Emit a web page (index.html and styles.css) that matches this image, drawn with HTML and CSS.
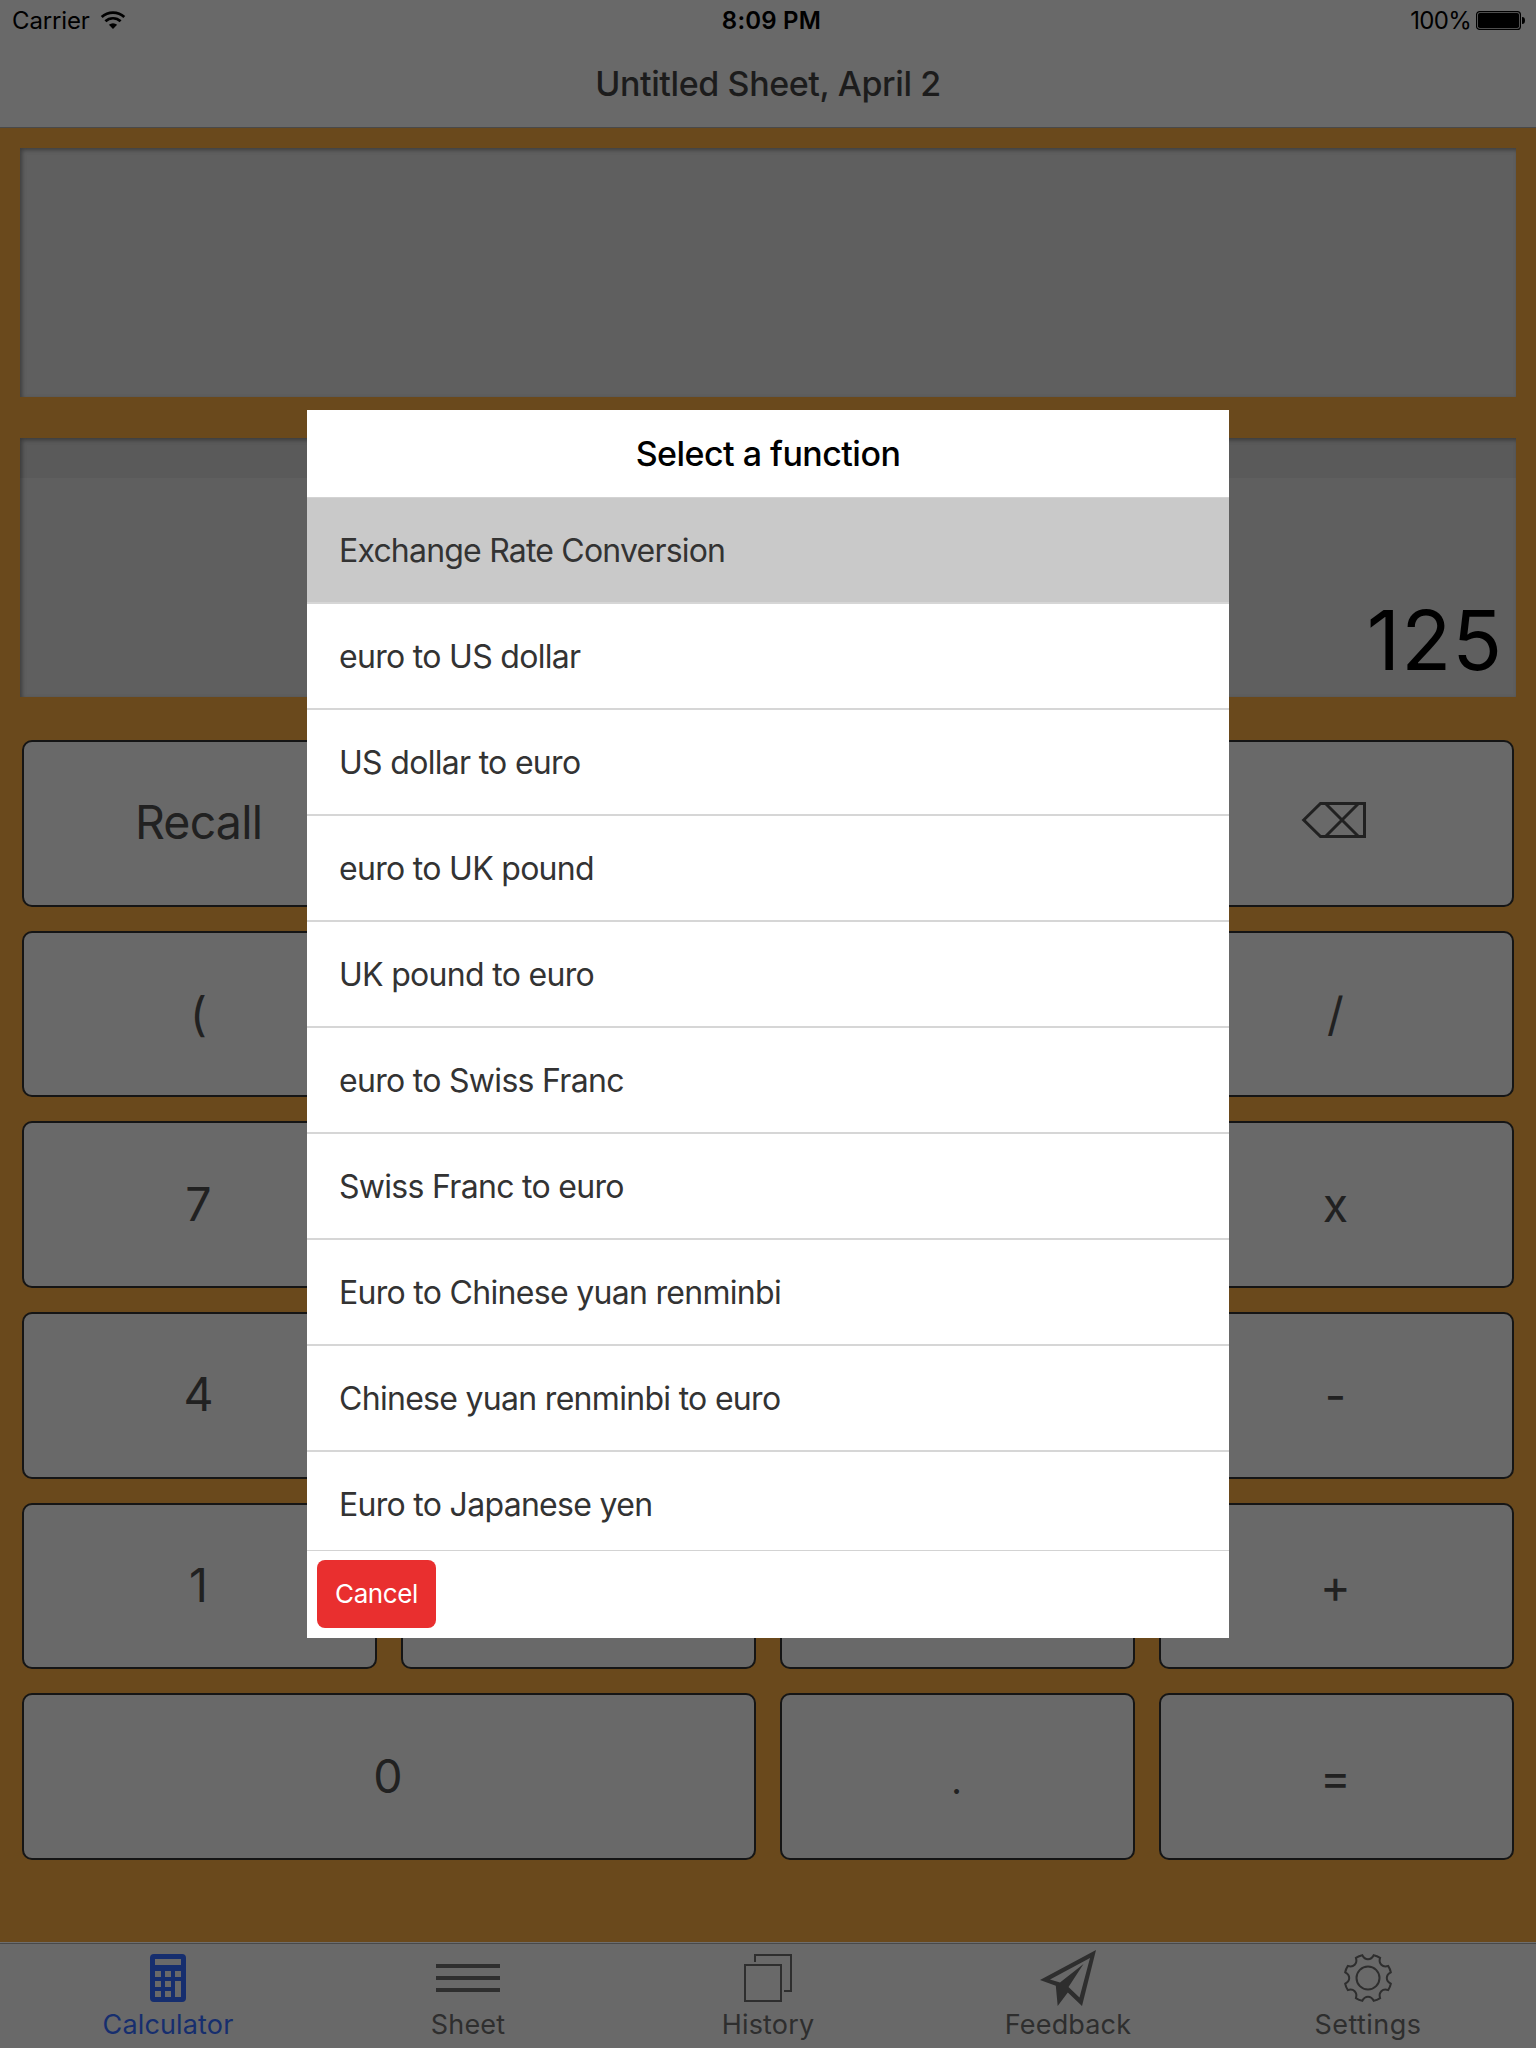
FILE: index.html
```html
<!DOCTYPE html>
<html lang="en">
<head>
<meta charset="utf-8">
<title>Calculator</title>
<link rel="stylesheet" href="styles.css">
</head>
<body>
<div class="app">
  <header class="topbar">
    <div class="status">
      <div class="status-left"><span class="carrier">Carrier</span>
        <svg class="wifi" width="26" height="20" viewBox="0 0 26 20"><g fill="none" stroke="#000" stroke-width="2.7"><path d="M1.7 7.1a16.4 16.4 0 0 1 22.6 0"/><path d="M5.4 11.3a11 11 0 0 1 15.2 0"/></g><path d="M13 19l-4.1-4.2a6 6 0 0 1 8.200 0z"/></svg>
      </div>
      <div class="time">8:09 PM</div>
      <div class="status-right"><span class="percent">100%</span>
        <svg class="battery" width="49" height="19" viewBox="0 0 49 19"><rect x=".6" y=".6" width="43.8" height="17.800" rx="3" fill="none" stroke="#000" stroke-width="1.200"/><rect x="2" y="2" width="41" height="15" rx="1.800"/><path d="M46 6c2 0 3 1 3 3.500s-1 3.500-3 3.500z"/></svg>
      </div>
    </div>
    <h1 class="title">Untitled Sheet, April 2</h1>
  </header>
  <main class="content">
    <section class="panel history-panel"></section>
    <section class="panel display-panel"><div class="display-strip"></div><div class="display-value">125</div></section>
    <section class="keys">
      <div class="key word"><span>Recall</span></div><div class="key"></div><div class="key"></div>
      <div class="key"><svg class="erase" width="66" height="38" viewBox="0 0 66 38" fill="none" stroke="#212121" stroke-width="3"><path d="M2.700 19L19.500 2.500H63.500V35.500H19.500z"/><path d="M24.500 2.500L57.500 35.500M57.500 2.500L24.500 35.500"/></svg></div>
      <div class="key"><span>(</span></div><div class="key"></div><div class="key"></div><div class="key"><span>/</span></div>
      <div class="key digit"><span>7</span></div><div class="key"></div><div class="key"></div><div class="key"><span>x</span></div>
      <div class="key digit"><span>4</span></div><div class="key"></div><div class="key"></div><div class="key"><span>-</span></div>
      <div class="key digit"><span>1</span></div><div class="key"></div><div class="key"></div><div class="key"><span>+</span></div>
      <div class="key digit wide"><span>0</span></div><div class="key dot"><span>.</span></div><div class="key"><span>=</span></div>
    </section>
  </main>
  <nav class="tabs">
    <a class="tab active"><svg width="36" height="52" viewBox="0 0 36 52"><path fill="#162e6e" fill-rule="evenodd" d="M4 0H32a4 4 0 0 1 4 4V44a4 4 0 0 1-4 4H4a4 4 0 0 1-4-4V4a4 4 0 0 1 4-4zM5 5V11H31V5zM5 17V23H11V17zM15 17V23H21V17zM25 17V23H31V17zM5 27V33H11V27zM15 27V33H21V27zM25 27V43H31V27zM5 37V43H11V37zM15 37V43H21V37z"/></svg><span>Calculator</span></a>
    <a class="tab"><svg width="64" height="52" viewBox="0 0 64 52"><path fill="#2e2e2e" d="M0 10H64v4H0zM0 22H64v4H0zM0 34H64v4H0z"/></svg><span>Sheet</span></a>
    <a class="tab"><svg width="48" height="52" viewBox="0 0 48 52" fill="none" stroke="#2e2e2e" stroke-width="2"><path d="M1 11H37V47H1zM11 8V1H47V37H40"/></svg><span>History</span></a>
    <a class="tab"><svg width="56" height="52" viewBox="0 0 56 52"><path fill="#2e2e2e" fill-rule="evenodd" d="M56-4L0 26L15.800 31.800L17.700 52L27.800 38.500L42 52zM50 4L39.500 43.500L28.500 33L43.500 10L20 28.500L10 25.500z"/></svg><span>Feedback</span></a>
    <a class="tab"><svg width="48" height="52" viewBox="0 0 48 52" fill="none" stroke="#2e2e2e" stroke-width="2"><circle cx="24" cy="24" r="11.500"/><path d="M18.300 1.200C19.500 3.500 21 5.200 24 5.200S28.500 3.500 29.700 1.200Q33 1.800 36.100 3.900C35.300 6.300 35.200 8.600 37.300 10.700S41.700 12.700 44.100 11.900Q46.200 15 46.800 18.300C44.500 19.500 42.800 21 42.800 24S44.500 28.500 46.800 29.700Q46.200 33 44.100 36.100C41.700 35.300 39.400 35.200 37.300 37.300S35.300 41.700 36.100 44.100Q33 46.200 29.700 46.800C28.500 44.500 27 42.800 24 42.800S19.500 44.500 18.300 46.800Q15 46.200 11.900 44.100C12.700 41.700 12.800 39.400 10.700 37.300S6.300 35.300 3.900 36.100Q1.800 33 1.200 29.700C3.500 28.500 5.200 27 5.200 24S3.500 19.500 1.200 18.300Q1.800 15 3.900 11.900C6.300 12.700 8.600 12.800 10.700 10.700S12.700 6.300 11.900 3.900Q15 1.800 18.300 1.200z"/></svg><span class="t-set">Settings</span></a>
  </nav>
</div>
<div class="modal">
  <h2 class="modal-title">Select a function</h2>
  <ul class="list">
    <li class="item selected"><span>Exchange Rate Conversion</span></li>
    <li class="item"><span>euro to US dollar</span></li>
    <li class="item"><span>US dollar to euro</span></li>
    <li class="item"><span>euro to UK pound</span></li>
    <li class="item"><span>UK pound to euro</span></li>
    <li class="item"><span>euro to Swiss Franc</span></li>
    <li class="item"><span>Swiss Franc to euro</span></li>
    <li class="item"><span>Euro to Chinese yuan renminbi</span></li>
    <li class="item"><span>Chinese yuan renminbi to euro</span></li>
    <li class="item"><span>Euro to Japanese yen</span></li>
  </ul>
  <footer class="modal-foot"><button class="cancel">Cancel</button></footer>
</div>
</body>
</html>
```
FILE: styles.css
```css
* { box-sizing: border-box; }
body { margin: 0; font-family: Inter, "Liberation Sans", sans-serif; }
h1, h2, ul { margin: 0; padding: 0; list-style: none; }
.app { width: 1536px; height: 2048px; display: flex; flex-direction: column; background: #6a491c; }

.topbar { height: 128px; background: #696969; border-bottom: 1px solid #494949; }
.status { height: 40px; display: grid; grid-template-columns: 1fr auto 1fr; font-size: 24px; line-height: 42px; color: #000; }
.status-left { display: flex; padding-left: 12px; }
.carrier { letter-spacing: -0.15px; }
.wifi { margin: 10px 0 0 10px; }
.time { padding-left: 7px; font-weight: 600; letter-spacing: 0.2px; }
.status-right { display: flex; justify-content: flex-end; padding-right: 11px; }
.percent { letter-spacing: -0.7px; }
.battery { margin: 11px 0 0 5px; }
.title { text-align: center; font-size: 34px; font-weight: 500; line-height: 88px; letter-spacing: -0.4px; color: #1c1c1c; }

.content { flex: 1; padding: 20px 20px 0; }
.panel { background: #5f5f5f; box-shadow: inset 2px 2px 4px #3c3c3c; }
.history-panel { height: 249px; }
.display-panel { height: 259px; margin-top: 41px; }
.display-strip { height: 40px; background: rgba(0, 0, 0, 0.05); }
.display-value { padding: 113px 13px 0 0; font-size: 82px; line-height: 100px; letter-spacing: 1px; text-align: right; color: #000; }

.keys { display: grid; grid-template-columns: repeat(4, 355px); grid-template-rows: repeat(6, 166.67px); gap: 24px; margin: 43px 2px 0; }
.key { display: flex; align-items: center; justify-content: center; padding-right: 2px; background: #696969; border: 2px solid #151515; border-radius: 10px; font-size: 46.500px; line-height: 56px; color: #212121; }
.digit, .word { padding-bottom: 2px; }
.word { letter-spacing: -0.8px; }
.dot { font-weight: 300; }
.wide { grid-column: span 2; }
.erase { margin: 0 3px 6px 0; }

.tabs { height: 106px; display: flex; padding: 0 18px; background: #696969; border-top: 1px solid #6e6e6e; box-shadow: inset 0 1px #494949; }
.tab { flex: 1; display: flex; flex-direction: column; align-items: center; padding-top: 11px; font-size: 27px; line-height: 36px; letter-spacing: 0.15px; color: #2e2e2e; }
.tab svg { flex: none; overflow: visible; }
.tab span { margin-top: 1px; }
.tab .t-set { letter-spacing: 0.45px; }
.active { color: #162e6e; }

.modal { position: absolute; left: 307px; top: 410px; width: 922px; height: 1228px; display: flex; flex-direction: column; background: #fff; }
.modal-title { height: 88px; border-bottom: 1px solid #d3d3d3; text-align: center; font-size: 34px; font-weight: 500; line-height: 88px; letter-spacing: -0.53px; color: #000; }
.list { flex: 1; overflow: hidden; }
.item { height: 106px; display: flex; align-items: center; padding: 1px 0 0 32px; border-bottom: 2px solid #d6d6d6; font-size: 32px; letter-spacing: -0.7px; color: #333; }
.selected { background: #c9c9c9; letter-spacing: -0.8px; }
.modal-foot { height: 88px; padding: 9px 10px; border-top: 1px solid #d3d3d3; }
.cancel { display: block; width: 119px; height: 68px; padding: 0 0 2px; border: 0; border-radius: 8px; background: #e92f2f; font: 26px Inter, "Liberation Sans", sans-serif; letter-spacing: -0.4px; color: #fff; }
```
